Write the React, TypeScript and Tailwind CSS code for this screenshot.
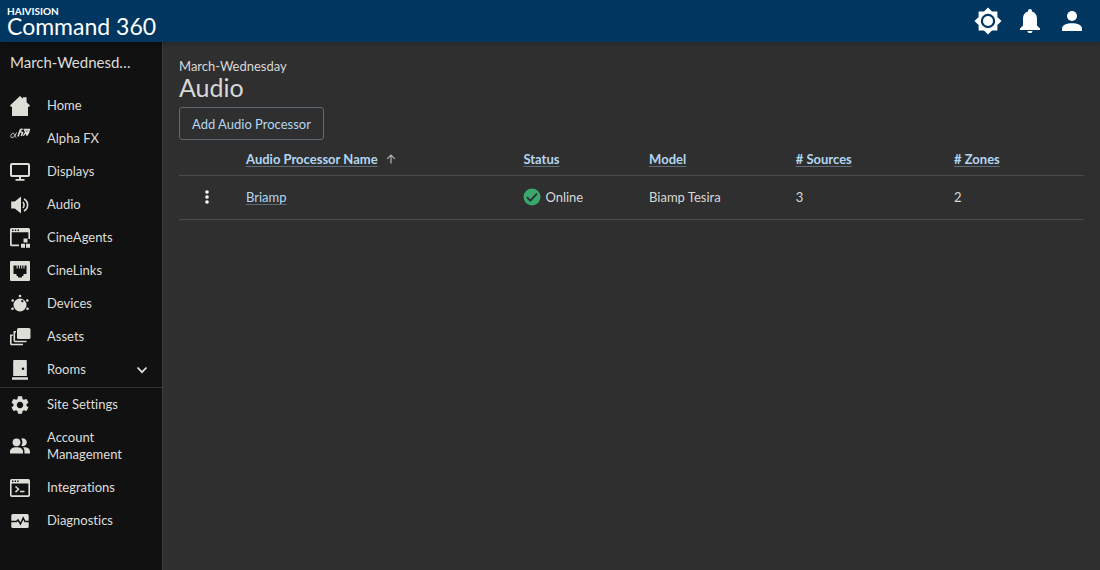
import type { ReactNode } from "react";

type NavItem = {
  label: string;
  icon: ReactNode;
  expandable?: boolean;
};

const Icon = ({ children }: { children: ReactNode }) => (
  <svg viewBox="0 0 20 20" className="size-5 shrink-0 overflow-visible" fill="currentColor" aria-hidden="true">
    {children}
  </svg>
);

const siteItems: NavItem[] = [
  {
    label: "Home",
    icon: (
      <Icon>
        <path d="M10 0 13 2.800V1.200h3.600v5L20 9.500l-.8 1.200H18V20H2v-9.300H.8L0 9.500Z" />
      </Icon>
    ),
  },
  {
    label: "Alpha FX",
    icon: (
      <Icon>
        <path
          d="M6.500 3.500C5 7.500 3.200 8.800 1.600 8.600.2 8.200.6 5.200 2.700 4.300 4.800 3.500 4.400 8.300 6.300 8.600"
          fill="none"
          stroke="currentColor"
          strokeWidth=".9"
        />
        <path
          d="M8 7.500 10.200 1Q10.600.1 12.600.5M9 3H12M11.300 7 12.800 3"
          fill="none"
          stroke="currentColor"
          strokeWidth="1.600"
        />
        <path d="M13.300-.2H20.300L19.300 3.500 17.600 6.800H16.300L15.600 4.800 14 6.800H12.500L14.900 3.300Z" />
        <path d="m15.600 1.400 1.200 1.300 1-1.300" fill="none" stroke="#111111" strokeWidth=".6" />
      </Icon>
    ),
  },
  {
    label: "Displays",
    icon: (
      <Icon>
        <rect x="1" y="2" width="18" height="12" rx="1" fill="none" stroke="currentColor" strokeWidth="2" />
        <path d="M9 14h2v3h3.500v1.800h-9V17H9Z" />
      </Icon>
    ),
  },
  {
    label: "Audio",
    icon: (
      <Icon>
        <path d="M1.200 6.500H4.800L11 1.500v17L4.800 13.500H1.200Z" />
        <path
          d="M12.800 7c1.700 1.400 1.700 4.600 0 6M14 4c4.800 2.600 4.800 9.400 0 12"
          fill="none"
          stroke="currentColor"
          strokeWidth="1.600"
        />
      </Icon>
    ),
  },
  {
    label: "CineAgents",
    icon: (
      <Icon>
        <path
          fillRule="evenodd"
          d="M1.500 0h17A1.500 1.500 0 0 1 20 1.500V11h-1.600V4.200H1.700V16.500H9V18.200H1.500A1.500 1.500 0 0 1 0 16.700V1.500A1.500 1.500 0 0 1 1.500 0ZM2 1.500v1.400h1.400V1.500Zm2.800 0v1.400h1.400V1.500Zm2.800 0v1.400H9V1.500Z"
        />
        <path d="M13.500 10.500h4v4h-4ZM11 15.800h4v4h-4ZM16 15.800h4v4h-4Z" />
      </Icon>
    ),
  },
  {
    label: "CineLinks",
    icon: (
      <Icon>
        <path
          fillRule="evenodd"
          d="M1 0h18a1 1 0 0 1 1 1v18a1 1 0 0 1-1 1H1a1 1 0 0 1-1-1V1a1 1 0 0 1 1-1ZM3.500 4.500v8.500h3v2h1.500V16.500h4V15h1.500v-2h3v-8.500h-2v3h-1v-3h-1.300v3h-1v-3h-1.300v3h-1v-3H7.600v3h-1v-3Z"
        />
      </Icon>
    ),
  },
  {
    label: "Devices",
    icon: (
      <Icon>
        <path
          fillRule="evenodd"
          d="M10 4.500a6.500 6.500 0 1 1 0 13a6.500 6.500 0 0 1 0-13Zm2.300 1.600a1.100 1.100 0 1 0 0 2.200a1.100 1.100 0 0 0 0-2.200Z"
        />
        <circle cx="10" cy="2" r="1.300" />
        <circle cx="2.700" cy="6.500" r="1.300" />
        <circle cx="17.300" cy="6.500" r="1.300" />
        <circle cx="2.500" cy="14.800" r="1.300" />
        <circle cx="17.500" cy="14.800" r="1.300" />
      </Icon>
    ),
  },
  {
    label: "Assets",
    icon: (
      <Icon>
        <rect x="7" y="1" width="13.500" height="11" rx="1.500" />
        <path
          d="M6 4.800H4.300v8.700a1 1 0 0 0 1 1H16.500M2.800 8.300H.8V16.500a1 1 0 0 0 1 1H13"
          fill="none"
          stroke="currentColor"
          strokeWidth="1.600"
        />
      </Icon>
    ),
  },
  {
    label: "Rooms",
    expandable: true,
    icon: (
      <Icon>
        <path
          fillRule="evenodd"
          d="M4 0h12a.8.8 0 0 1 .8.8V16H3.200V.8A.8.8 0 0 1 4 0Zm9 7.500a1.300 1.300 0 1 0 0 2.600a1.300 1.300 0 0 0 0-2.600Z"
        />
        <rect x="2" y="17.300" width="16" height="2.500" rx=".5" />
      </Icon>
    ),
  },
];

const adminItems: NavItem[] = [
  {
    label: "Site Settings",
    icon: (
      <svg viewBox="2 2 20 20" className="size-5 shrink-0 p-px" fill="currentColor" aria-hidden="true">
        <path d="M19.140 12.940c.04-.3.06-.61.06-.94 0-.32-.02-.64-.07-.94l2.030-1.580c.18-.14.23-.41.12-.61l-1.920-3.320c-.12-.22-.37-.29-.59-.22l-2.390.96c-.5-.38-1.030-.7-1.620-.94l-.36-2.540c-.04-.24-.24-.41-.48-.41h-3.840c-.24 0-.43.17-.47.41l-.36 2.540c-.59.24-1.130.57-1.620.94l-2.390-.96c-.22-.08-.47 0-.59.22L2.740 8.870c-.12.21-.08.47.12.61l2.030 1.580c-.05.3-.09.63-.09.94s.02.64.07.94l-2.030 1.580c-.18.14-.23.41-.12.61l1.920 3.320c.12.22.37.29.59.22l2.390-.96c.5.38 1.030.7 1.620.94l.36 2.540c.05.24.24.41.48.41h3.840c.24 0 .44-.17.47-.41l.36-2.540c.59-.24 1.130-.56 1.620-.94l2.390.96c.22.08.47 0 .59-.22l1.920-3.320c.12-.22.07-.47-.12-.61l-2.010-1.580zM12 15.600c-1.980 0-3.600-1.620-3.600-3.600s1.620-3.600 3.600-3.600 3.600 1.620 3.600 3.600-1.620 3.600-3.600 3.600z" />
      </svg>
    ),
  },
  {
    label: "Account Management",
    icon: (
      <Icon>
        <circle cx="6.500" cy="6.300" r="3.900" />
        <path d="M0 17.500v-1.800c0-3.300 3-4.500 6.500-4.500s6.500 1.200 6.500 4.500v1.800Z" />
        <path d="M11.200 2.800a3.900 3.900 0 1 1 0 7a6 6 0 0 0 0-7ZM13 11.200c4-.3 7 1 7 4.500v1.800h-5.500v-1.800c0-2-.6-3.400-1.500-4.500Z" />
      </Icon>
    ),
  },
  {
    label: "Integrations",
    icon: (
      <Icon>
        <path
          fillRule="evenodd"
          d="M1.800 1h16.400A1.800 1.800 0 0 1 20 2.800v14.400a1.800 1.800 0 0 1-1.800 1.800H1.800A1.800 1.800 0 0 1 0 17.200V2.800A1.800 1.800 0 0 1 1.800 1ZM1.600 5.500v11.800h16.800V5.500ZM2 2.500v1.400h1.400V2.500Zm2.600 0v1.400H6V2.500Zm2.600 0v1.400h1.400V2.500Z"
        />
        <path d="m5.500 8.500 3 2.800-3 2.800M10 13.500h4.500" fill="none" stroke="currentColor" strokeWidth="1.500" />
      </Icon>
    ),
  },
  {
    label: "Diagnostics",
    icon: (
      <Icon>
        <rect x="1.300" y="3" width="17.400" height="14" rx="1.500" />
        <path d="M1 10.500h5.500l1.500-1.500 2.500 4 2.700-6 1.800 3.500h4" fill="none" stroke="#111111" strokeWidth="1.500" />
      </Icon>
    ),
  },
];

const columns = [
  { label: "Audio Processor Name", width: "w-[33.1%]", sorted: true },
  { label: "Status", width: "w-[15%]" },
  { label: "Model", width: "w-[17.5%]" },
  { label: "# Sources", width: "w-[18.9%]" },
  { label: "# Zones", width: "w-[15.5%]" },
];

const processors = [{ name: "Briamp", status: "Online", model: "Biamp Tesira", sources: 3, zones: 2 }];

const Header = () => (
  <header className="z-10 flex h-[42px] shrink-0 items-center justify-between bg-[#003660] pr-[18px] pl-[7px] text-white shadow-md">
    <a href="#" className="flex flex-col">
      <span className="text-[10px] leading-[10px] font-bold">HAIVISION</span>
      <span className="text-[23px] leading-5">Command 360</span>
    </a>
    <div className="flex items-center gap-4">
      <button aria-label="Brightness">
        <svg viewBox="0 0 28 28" className="size-7" fill="currentColor">
          <path
            fillRule="evenodd"
            d="m14 .5 4 4.100h5.400V10l4.100 4-4.100 4v5.400H18l-4 4.100-4-4.100H4.600V18L.5 14l4.100-4V4.600H10ZM14 6.800a7.200 7.200 0 1 0 0 14.400a7.200 7.200 0 0 0 0-14.400Z"
          />
          <circle cx="14" cy="14" r="5" />
        </svg>
      </button>
      <button aria-label="Notifications">
        <svg viewBox="0 0 24 24" className="size-6" fill="currentColor">
          <path d="M12 0a2 2 0 0 1 2 2v.5c3.500 1 5 4 5 7.500v6.500l3 3V21H2v-1.500l3-3V10c0-3.500 1.500-6.500 5-7.500V2a2 2 0 0 1 2-2ZM9.500 22h5a2.500 2.200 0 0 1-5 0Z" />
        </svg>
      </button>
      <button aria-label="Profile" className="ml-1">
        <svg viewBox="0 0 20 20" className="size-5" fill="currentColor">
          <circle cx="10" cy="5" r="5" />
          <path d="M0 20v-2.500c0-3.500 5-5.300 10-5.300s10 1.800 10 5.300V20Z" />
        </svg>
      </button>
    </div>
  </header>
);

const NavList = ({ items }: { items: NavItem[] }) => (
  <ul>
    {items.map((item) => (
      <li key={item.label}>
        <a href="#" className="flex items-center gap-[17px] py-2 pr-3 pl-[10px] leading-[17px]">
          <span className="-my-2 flex">{item.icon}</span>
          <span className="flex-1">{item.label}</span>
          {item.expandable && (
            <svg viewBox="0 0 16 16" className="size-4" fill="none" stroke="currentColor" strokeWidth="1.800">
              <path d="m3.500 5.500 4.500 4.700 4.500-4.700" />
            </svg>
          )}
        </a>
      </li>
    ))}
  </ul>
);

const Sidebar = () => (
  <aside className="w-[163px] shrink-0 border-r border-[#3c3c3c] bg-[#111111] text-[#deded9]">
    <h2 className="truncate pt-2 pr-7 pb-[15px] pl-[10px] text-[15px] leading-6">March-Wednesday</h2>
    <nav>
      <NavList items={siteItems} />
      <hr className="mt-px border-[#333333]" />
      <NavList items={adminItems} />
    </nav>
  </aside>
);

const ProcessorTable = () => (
  <table className="mt-[3px] w-full table-fixed text-left">
    <thead>
      <tr className="h-8 border-b border-[#4b4b4b]">
        <th className="w-[67px]" />
        {columns.map((column) => (
          <th key={column.label} className={`${column.width} font-bold text-[#b3d6f2]`}>
            <button className="flex items-center gap-2">
              <span className="underline decoration-[#5d6c78] underline-offset-2">{column.label}</span>
              {column.sorted && (
                <svg
                  viewBox="0 0 10 10"
                  className="size-[10px] text-[#b5b5b5]"
                  fill="none"
                  stroke="currentColor"
                  strokeWidth="1.200"
                >
                  <path d="M5 9.500V1M1.200 4.800 5 1l3.800 3.800" />
                </svg>
              )}
            </button>
          </th>
        ))}
      </tr>
    </thead>
    <tbody>
      {processors.map((processor) => (
        <tr key={processor.name} className="h-11 border-b border-[#4b4b4b]">
          <td className="pl-5">
            <button aria-label="Actions" className="flex">
              <svg viewBox="0 0 16 16" className="size-4" fill="white">
                <circle cx="8" cy="3" r="1.800" />
                <circle cx="8" cy="8" r="1.800" />
                <circle cx="8" cy="13" r="1.800" />
              </svg>
            </button>
          </td>
          <td>
            <a href="#" className="text-[#b3d6f2] underline decoration-[#5d6c78] underline-offset-2">
              {processor.name}
            </a>
          </td>
          <td>
            <div className="flex items-center gap-1">
              <svg viewBox="0 0 18 18" className="size-[18px]">
                <circle cx="9" cy="9" r="8.500" fill="#3aa76d" />
                <path d="m3.800 9.200 3.500 3.400 6.700-7" fill="none" stroke="#2f2f2f" strokeWidth="1.800" />
              </svg>
              {processor.status}
            </div>
          </td>
          <td>{processor.model}</td>
          <td>{processor.sources}</td>
          <td>{processor.zones}</td>
        </tr>
      ))}
    </tbody>
  </table>
);

const App = () => (
  <div className="flex min-h-screen flex-col bg-[#2f2f2f] font-['Lato','Liberation_Sans',sans-serif] text-[13px] leading-5 text-[#d8d8d8] [font-variant-ligatures:none]">
    <Header />
    <div className="flex flex-1">
      <Sidebar />
      <main className="min-w-0 flex-1 px-4 pt-[14px]">
        <p>March-Wednesday</p>
        <h1 className="text-[25px] leading-[22px]">Audio</h1>
        <button className="mt-[9px] h-[33px] rounded-[3px] border border-[#5f6a73] px-3 text-[#b3d6f2]">
          Add Audio Processor
        </button>
        <ProcessorTable />
      </main>
    </div>
  </div>
);

export default App;
